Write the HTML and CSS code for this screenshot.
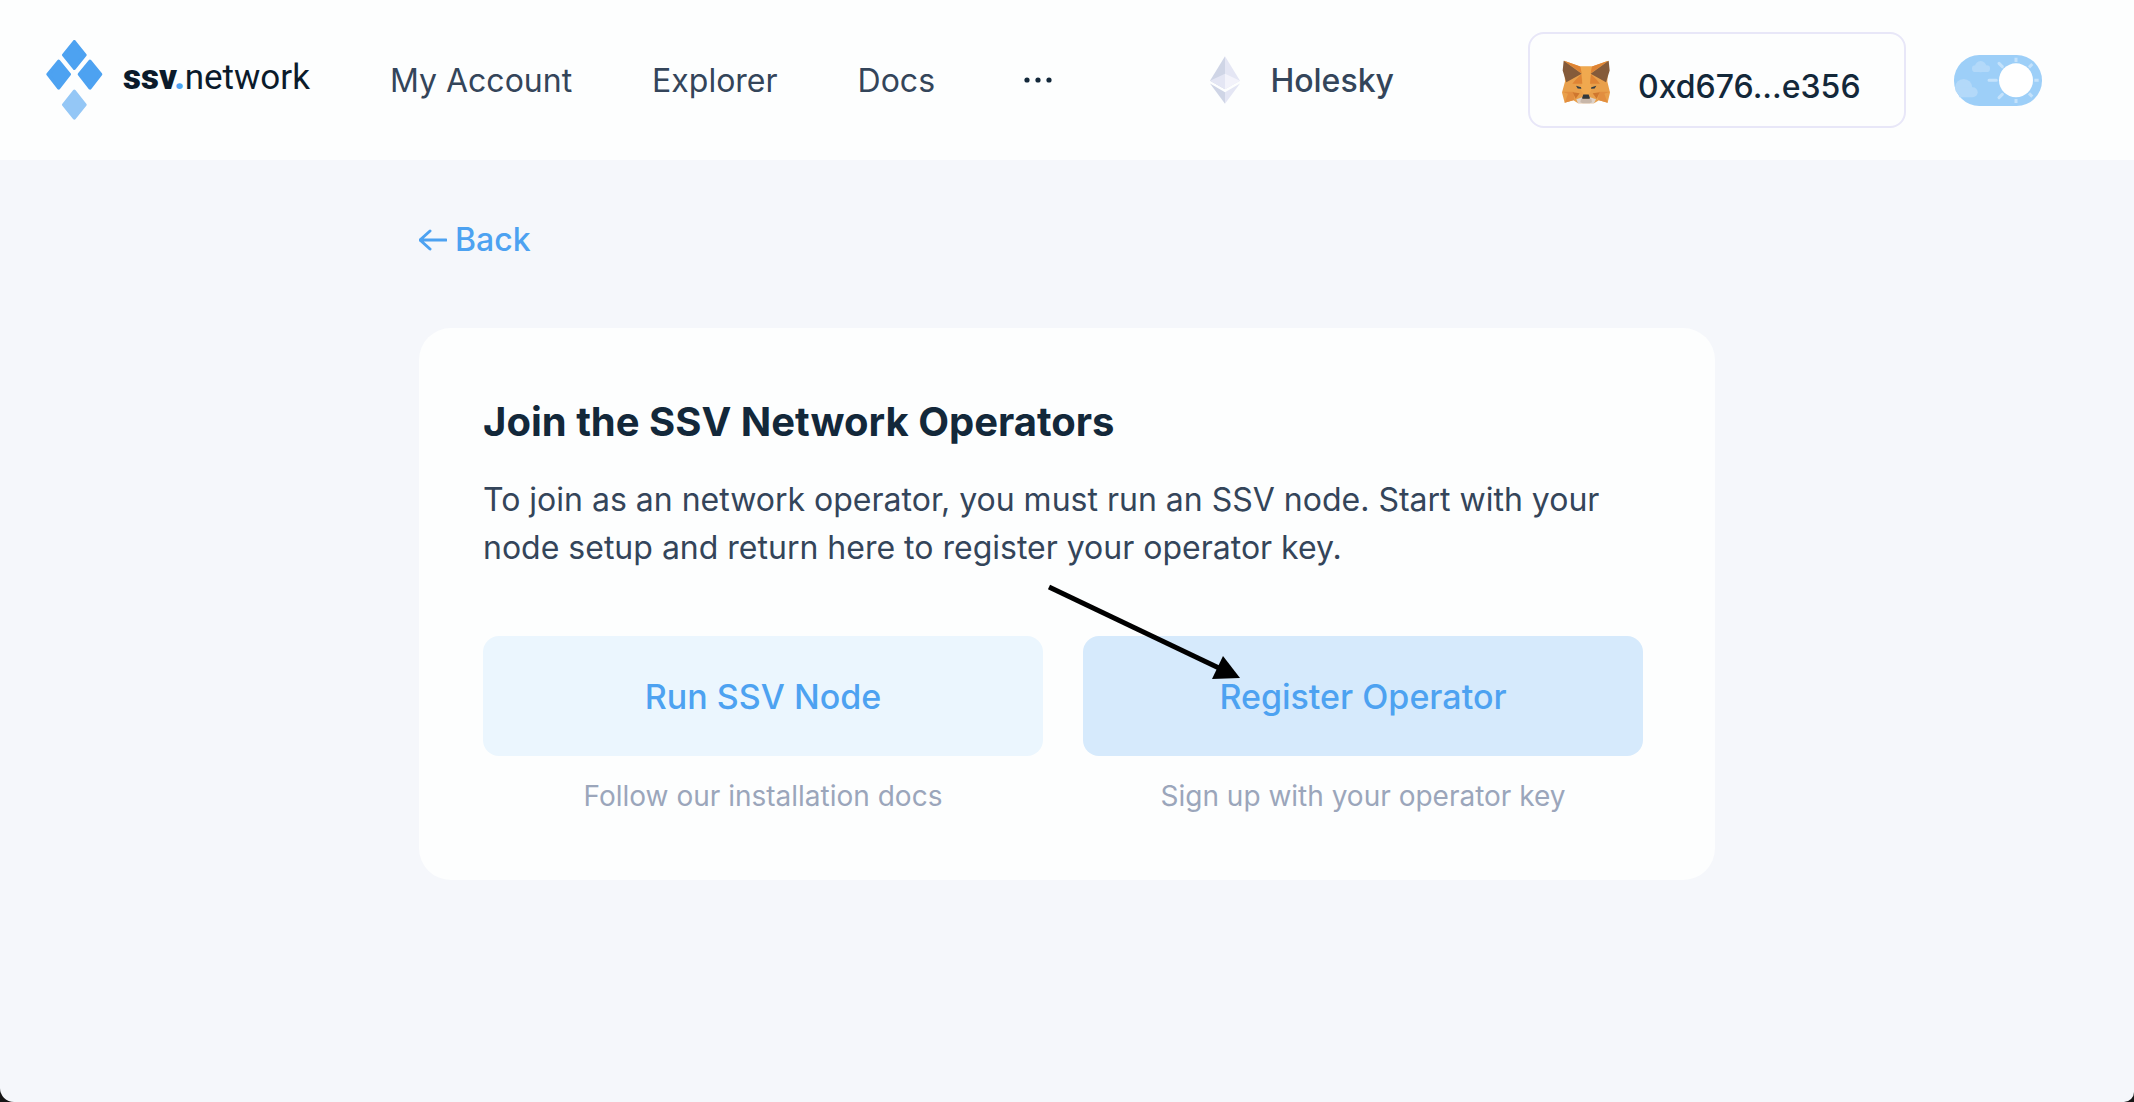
FILE: index.html
```html
<!DOCTYPE html>
<html lang="en">
<head>
<meta charset="utf-8">
<meta name="viewport" content="width=device-width, initial-scale=1">
<title>Join the SSV Network Operators</title>
<link rel="stylesheet" href="styles.css">
</head>
<body>
<div class="page">
  <header class="header">
    <a class="brand" href="#">
      <svg class="brand-mark" viewBox="48 60 171 240" aria-hidden="true">
        <g stroke-width="10" stroke-linejoin="round">
          <g fill="#4da2f1" stroke="#4da2f1">
            <path d="M133 65 165 105 133 145 101 105Z"/>
            <path d="M86 124 118 163 86 204 54 163Z"/>
            <path d="M180 124 212 163 180 204 148 163Z"/>
          </g>
          <path fill="#94c7f6" stroke="#94c7f6" d="M133 214 165 254 133 294 101 254Z"/>
        </g>
      </svg>
      <span class="brand-name"><b>ssv</b><b class="brand-dot">.</b>network</span>
    </a>
    <nav class="nav">
      <a href="#">My Account</a>
      <a href="#">Explorer</a>
      <a href="#">Docs</a>
      <button class="more" type="button" aria-label="More">
        <svg viewBox="0 0 30 6" aria-hidden="true"><circle cx="4" cy="3" r="2.6"/><circle cx="15" cy="3" r="2.6"/><circle cx="26" cy="3" r="2.6"/></svg>
      </button>
    </nav>
    <div class="tools">
      <button class="network" type="button">
        <svg class="eth" viewBox="62 48 90 143" aria-hidden="true">
          <path fill="#cfd5e6" d="M107 48 62 122 107 147Z"/>
          <path fill="#e4e6f4" d="M107 48 152 122 107 147Z"/>
          <path fill="#e4e6f4" d="M107 101 62 122 107 147Z"/>
          <path fill="#f3f3fb" d="M107 101 152 122 107 147Z"/>
          <path fill="#cfd5e6" d="M62 130 107 156V191Z"/>
          <path fill="#e4e6f4" d="M152 130 107 156V191Z"/>
        </svg>
        Holesky
      </button>
      <button class="wallet" type="button">
        <svg class="fox" viewBox="67 62 144 129" aria-hidden="true">
          <path fill="#e9a04b" d="M73 63 122 80H157L206 63 203 125 211 158 204 189 178 181 163 190H115L101 181 75 189 67 158 76 125Z"/>
          <path fill="#f0a94f" d="M122 80H157L151 120 156 150 146 165H133L123 150 128 120Z"/>
          <path fill="#df8434" d="M125 103 128 132 98 132 108 120ZM154 103 151 132 181 132 171 120ZM73 63 122 80 126 100ZM206 63 157 80 153 100Z"/>
          <path fill="#855b3a" d="M72 63 126 102 80 127 69 92ZM207 63 153 102 199 127 210 92Z"/>
          <path fill="#e28e3f" d="M68 156H101L104 178 101 181 75 189 85 162ZM211 156H178L175 178 178 181 204 189 194 162Z"/>
          <path fill="#cf772f" d="M99 157 120 160 108 177ZM180 157 159 160 171 177Z"/>
          <path fill="#333d43" d="M109 138 124 142 125 147 114 146ZM170 138 155 142 154 147 165 146Z"/>
          <path fill="#ddd2c9" d="M110 178 128 172 131 178H148L151 172 169 178 163 190H115Z"/>
          <path fill="#c8b7a9" d="M124 177H155L157 187 150 190H129L122 187Z"/>
          <path fill="#30383d" d="M131 164H147L151 175 149 177H129L127 175Z"/>
        </svg>
        <span>0xd676...e356</span>
      </button>
      <label class="theme">
        <input type="checkbox" role="switch" aria-label="Light theme" checked>
        <svg viewBox="73 45 264 153" aria-hidden="true">
          <rect x="73" y="45" width="264" height="153" rx="76" fill="#9dcff8"/>
          <g fill="#b3d9f9">
            <circle cx="153" cy="80" r="17"/>
            <rect x="127" y="76" width="54" height="20" rx="10"/>
            <circle cx="102" cy="143" r="26"/>
            <path d="M82 142H129a15 15 0 0 1 0 30H89Z"/>
          </g>
          <g stroke="#c4e2fb" stroke-width="9">
            <path d="M259 53V66M259 177V189M314 121H327M298 82 308 72M298 160 308 170"/>
            <path stroke-linecap="round" d="M178 121H200M208 70 218 80M208 173 218 163"/>
          </g>
          <circle cx="259" cy="121" r="51" fill="#fff"/>
        </svg>
      </label>
    </div>
  </header>

  <main class="main">
    <a class="back" href="#">
      <svg viewBox="0 0 28 22" aria-hidden="true"><path d="M27 11H1M11 2 1 11 11 20"/></svg>
      Back
    </a>
    <section class="card">
      <h1>Join the SSV Network Operators</h1>
      <p class="intro">To join as an network operator, you must run an SSV node. Start with your node setup and return here to register your operator key.</p>
      <div class="actions">
        <div class="action">
          <button class="btn" type="button">Run SSV Node</button>
          <p>Follow our installation docs</p>
        </div>
        <div class="action">
          <button class="btn btn-active" type="button">Register Operator</button>
          <p>Sign up with your operator key</p>
          <svg class="pointer" viewBox="0 0 194 96" aria-hidden="true">
            <path d="M2 3 174 85" fill="none" stroke="#000" stroke-width="5"/>
            <path d="M176 72 193 94 165 95Z"/>
          </svg>
        </div>
      </div>
    </section>
  </main>
</div>
</body>
</html>
```
FILE: styles.css
```css
* {
  box-sizing: border-box;
}

html {
  background: #161616;
}

body {
  margin: 0;
  font-family: Inter, "Liberation Sans", sans-serif;
  font-size: 32px;
  color: #34455a;
}

a {
  color: inherit;
  text-decoration: none;
}

button {
  padding: 0;
  border: 0;
  background: none;
  color: inherit;
  font: inherit;
  cursor: pointer;
}

svg {
  display: block;
  flex: none;
}

h1,
p {
  margin: 0;
}

.page {
  min-height: 100vh;
  background: #f5f7fb;
  border-radius: 0 0 10px 14px;
}

.header {
  display: flex;
  align-items: center;
  height: 160px;
  padding: 0 92px 0 46px;
  background: #fdfefe;
}

.brand {
  display: flex;
  align-items: center;
  gap: 20px;
}

.brand-mark {
  width: 57px;
  height: 80px;
}

.brand-name {
  padding-bottom: 4px;
  font-family: Roboto, sans-serif;
  font-size: 35px;
  font-weight: 400;
  line-height: 48px;
  color: #0b1b2b;
}

.brand-name b {
  font-weight: 900;
}

.brand-name .brand-dot {
  color: #4da2f1;
}

.nav {
  display: flex;
  align-items: center;
  gap: 80px;
  margin-left: 80px;
}

.more {
  padding: 8px;
}

.more svg {
  width: 30px;
  height: 6px;
  fill: #13283a;
}

.tools {
  display: flex;
  align-items: center;
  margin-left: auto;
}

.network {
  display: flex;
  align-items: center;
  gap: 30px;
  font-weight: 500;
}

.eth {
  width: 30px;
  height: 48px;
}

.wallet {
  display: flex;
  align-items: center;
  gap: 28px;
  width: 378px;
  height: 96px;
  margin: 0 48px 0 134px;
  padding: 4px 32px 0;
  border: 2px solid #e8e7f8;
  border-radius: 16px;
  font-weight: 500;
  color: #13283a;
}

.wallet span {
  padding-top: 8px;
}

.fox {
  width: 48px;
  height: 44px;
}

.theme {
  position: relative;
  width: 88px;
  height: 51px;
}

.theme input {
  position: absolute;
  inset: 0;
  width: 100%;
  height: 100%;
  margin: 0;
  opacity: 0;
  cursor: pointer;
}

.theme svg {
  width: 100%;
  height: 100%;
}

.main {
  max-width: 1296px;
  margin: 0 auto;
  padding: 56px 0;
}

.back {
  display: inline-flex;
  align-items: center;
  gap: 8px;
  line-height: 48px;
  font-weight: 500;
  color: #4da2f1;
}

.back svg {
  width: 28px;
  height: 22px;
  fill: none;
  stroke: currentColor;
  stroke-width: 3;
  stroke-linecap: round;
  stroke-linejoin: round;
}

.card {
  margin-top: 64px;
  padding: 64px 72px 64px 64px;
  border-radius: 32px;
  background: #fdfefe;
}

h1 {
  font-size: 40px;
  line-height: 60px;
  font-weight: 700;
  color: #13283a;
}

.intro {
  margin-top: 24px;
  line-height: 48px;
}

.actions {
  display: grid;
  grid-template-columns: 1fr 1fr;
  gap: 40px;
  margin-top: 64px;
}

.action {
  position: relative;
  text-align: center;
}

.btn {
  width: 100%;
  height: 120px;
  border-radius: 16px;
  background: #ebf6fe;
  color: #4da2f1;
  font-size: 34px;
  font-weight: 500;
}

.btn-active {
  background: #d6eafc;
}

.action p {
  margin-top: 20px;
  font-size: 28px;
  line-height: 40px;
  color: #9ba6bb;
}

.pointer {
  position: absolute;
  top: -52px;
  left: -36px;
  width: 194px;
  height: 96px;
  pointer-events: none;
}
```
